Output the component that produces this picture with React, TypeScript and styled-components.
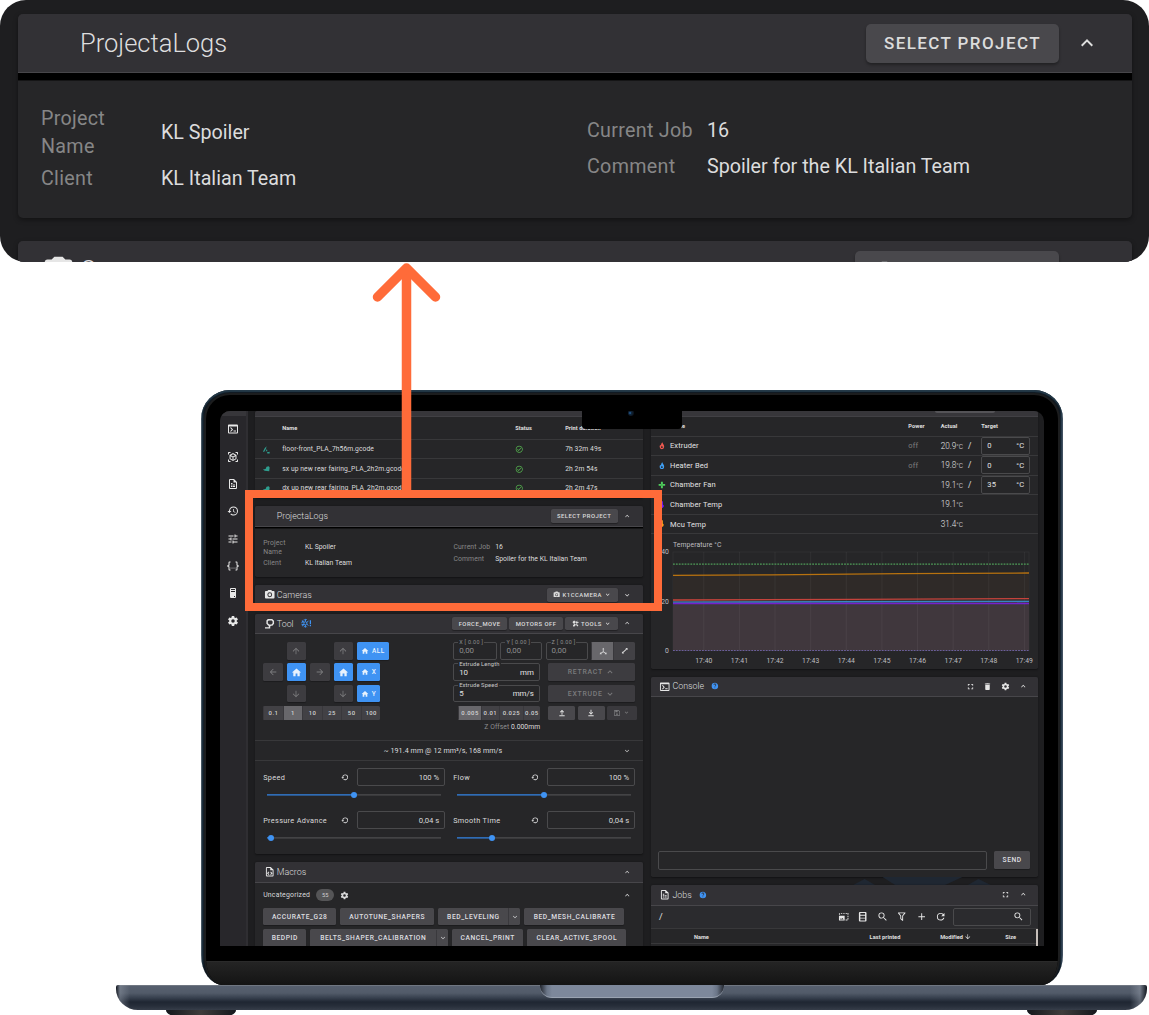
import React from 'react';
import styled, { createGlobalStyle, css } from 'styled-components';

const Global = createGlobalStyle`
  *, *::before, *::after { box-sizing: border-box; }
  body { margin: 0; background: #fff; font-family: Roboto, "Liberation Sans", sans-serif; }
`;

/* ---------- icons ---------- */

const paths = {
  console: 'M20,19V7H4V19H20M20,3A2,2 0 0,1 22,5V19A2,2 0 0,1 20,21H4A2,2 0 0,1 2,19V5C2,3.89 2.9,3 4,3H20M13,17V15H18V17H13M9.58,13L5.57,9H8.4L11.7,12.3C12.09,12.69 12.09,13.33 11.7,13.72L8.42,17H5.59L9.58,13Z',
  cubeScan: 'M17,22V20H20V17H22V20.5C22,20.89 21.84,21.24 21.54,21.54C21.24,21.84 20.89,22 20.5,22H17M7,22H3.5C3.11,22 2.76,21.84 2.46,21.54C2.16,21.24 2,20.89 2,20.5V17H4V20H7V22M17,2H20.5C20.89,2 21.24,2.16 21.54,2.46C21.84,2.76 22,3.11 22,3.5V7H20V4H17V2M7,2V4H4V7H2V3.5C2,3.11 2.16,2.76 2.46,2.46C2.76,2.16 3.11,2 3.5,2H7M13,17.25L17,14.95V10.36L13,12.66V17.25M12,10.92L16,8.63L12,6.28L8,8.63L12,10.92M7,14.95L11,17.25V12.66L7,10.36V14.95M18.23,7.59C18.73,7.91 19,8.34 19,8.91V15.23C19,15.8 18.73,16.23 18.23,16.55L12.75,19.73C12.25,20.05 11.75,20.05 11.25,19.73L5.77,16.55C5.27,16.23 5,15.8 5,15.23V8.91C5,8.34 5.27,7.91 5.77,7.59L11.25,4.41C11.5,4.28 11.75,4.22 12,4.22C12.25,4.22 12.5,4.28 12.75,4.41L18.23,7.59Z',
  fileTable: 'M14,2H6A2,2 0 0,0 4,4V20A2,2 0 0,0 6,22H18A2,2 0 0,0 20,20V8L14,2M18,20H6V4H13V9H18V20M8,10H11V12H8V10M8,13H11V15H8V13M12,13H16V15H12V13M8,16H11V18H8V16M12,16H16V18H12V16Z',
  history: 'M13.5,8H12V13L16.28,15.54L17,14.33L13.5,12.25V8M13,3A9,9 0 0,0 4,12H1L4.96,16.03L9,12H6A7,7 0 0,1 13,5A7,7 0 0,1 20,12A7,7 0 0,1 13,19C11.07,19 9.32,18.21 8.06,16.94L6.64,18.36C8.27,20 10.5,21 13,21A9,9 0 0,0 22,12A9,9 0 0,0 13,3',
  tune: 'M3,17V19H9V17H3M3,5V7H13V5H3M13,21V19H21V17H13V15H11V21H13M7,9V11H3V13H7V15H9V9H7M21,13V11H11V13H21M15,9H17V7H21V5H17V3H15V9Z',
  json: 'M5,3H7V5H5V10A2,2 0 0,1 3,12A2,2 0 0,1 5,14V19H7V21H5C3.93,20.73 3,20.1 3,19V15A2,2 0 0,0 1,13H0V11H1A2,2 0 0,0 3,9V5A2,2 0 0,1 5,3M19,3A2,2 0 0,1 21,5V9A2,2 0 0,0 23,11H24V13H23A2,2 0 0,0 21,15V19A2,2 0 0,1 19,21H17V19H19V14A2,2 0 0,1 21,12A2,2 0 0,1 19,10V5H17V3H19M12,15A1,1 0 0,1 13,16A1,1 0 0,1 12,17A1,1 0 0,1 11,16A1,1 0 0,1 12,15M8,15A1,1 0 0,1 9,16A1,1 0 0,1 8,17A1,1 0 0,1 7,16A1,1 0 0,1 8,15M16,15A1,1 0 0,1 17,16A1,1 0 0,1 16,17A1,1 0 0,1 15,16A1,1 0 0,1 16,15Z',
  tower: 'M8,2H16A2,2 0 0,1 18,4V20A2,2 0 0,1 16,22H8A2,2 0 0,1 6,20V4A2,2 0 0,1 8,2M8,4V6H16V4H8M16,8H8V10H16V8M16,18H14V20H16V18Z',
  cog: 'M12,15.5A3.5,3.5 0 0,1 8.5,12A3.5,3.5 0 0,1 12,8.5A3.5,3.5 0 0,1 15.5,12A3.5,3.5 0 0,1 12,15.5M19.43,12.97C19.47,12.65 19.5,12.33 19.5,12C19.5,11.67 19.47,11.34 19.43,11L21.54,9.37C21.73,9.22 21.78,8.95 21.66,8.73L19.66,5.27C19.54,5.05 19.27,4.96 19.05,5.05L16.56,6.05C16.04,5.66 15.5,5.32 14.87,5.07L14.5,2.42C14.46,2.18 14.25,2 14,2H10C9.75,2 9.54,2.18 9.5,2.42L9.13,5.07C8.5,5.32 7.96,5.66 7.44,6.05L4.95,5.05C4.73,4.96 4.46,5.05 4.34,5.27L2.34,8.73C2.21,8.95 2.27,9.22 2.46,9.37L4.57,11C4.53,11.34 4.5,11.67 4.5,12C4.5,12.33 4.53,12.65 4.57,12.97L2.46,14.63C2.27,14.78 2.21,15.05 2.34,15.27L4.34,18.73C4.46,18.95 4.73,19.03 4.95,18.95L7.44,17.94C7.96,18.34 8.5,18.68 9.13,18.93L9.5,21.58C9.54,21.82 9.75,22 10,22H14C14.25,22 14.46,21.82 14.5,21.58L14.87,18.93C15.5,18.67 16.04,18.34 16.56,17.94L19.05,18.95C19.27,19.03 19.54,18.95 19.66,18.73L21.66,15.27C21.78,15.05 21.73,14.78 21.54,14.63L19.43,12.97Z',
  camera: 'M4,4H7L9,2H15L17,4H20A2,2 0 0,1 22,6V18A2,2 0 0,1 20,20H4A2,2 0 0,1 2,18V6A2,2 0 0,1 4,4M12,7A5,5 0 0,0 7,12A5,5 0 0,0 12,17A5,5 0 0,0 17,12A5,5 0 0,0 12,7M12,9A3,3 0 0,1 15,12A3,3 0 0,1 12,15A3,3 0 0,1 9,12A3,3 0 0,1 12,9Z',
  up: 'M7.41,15.41L12,10.83L16.59,15.41L18,14L12,8L6,14L7.41,15.41Z',
  down: 'M7.41,8.58L12,13.17L16.59,8.58L18,10L12,16L6,10L7.41,8.58Z',
  arrowUp: 'M13,20H11V8L5.5,13.5L4.08,12.08L12,4.16L19.92,12.08L18.5,13.5L13,8V20Z',
  home: 'M10,20V14H14V20H19V12H22L12,3L2,12H5V20H10Z',
  magnify: 'M9.5,3A6.5,6.5 0 0,1 16,9.5C16,11.11 15.41,12.59 14.44,13.73L14.71,14H15.5L20.5,19L19,20.5L14,15.5V14.71L13.73,14.44C12.59,15.41 11.11,16 9.5,16A6.5,6.5 0 0,1 3,9.5A6.5,6.5 0 0,1 9.5,3M9.5,5C7,5 5,7 5,9.5C5,12 7,14 9.5,14C12,14 14,12 14,9.5C14,7 12,5 9.5,5Z',
  fullscreen: 'M5,5H10V7H7V10H5V5M14,5H19V10H17V7H14V5M17,14H19V19H14V17H17V14M10,17V19H5V14H7V17H10Z',
  trash: 'M19,4H15.5L14.5,3H9.5L8.5,4H5V6H19M6,19A2,2 0 0,0 8,21H16A2,2 0 0,0 18,19V7H6V19Z',
  refresh: 'M17.65,6.35C16.2,4.9 14.21,4 12,4A8,8 0 0,0 4,12A8,8 0 0,0 12,20C15.73,20 18.84,17.45 19.73,14H17.65C16.83,16.33 14.61,18 12,18A6,6 0 0,1 6,12A6,6 0 0,1 12,6C13.66,6 15.14,6.69 16.22,7.78L13,11H20V4L17.65,6.35Z',
  plus: 'M19,13H13V19H11V13H5V11H11V5H13V11H19V13Z',
  filter: 'M15,19.88C15.04,20.18 14.94,20.5 14.71,20.71C14.32,21.1 13.69,21.1 13.3,20.71L9.29,16.7C9.06,16.47 8.96,16.16 9,15.87V10.75L4.21,4.62C3.87,4.19 3.95,3.56 4.38,3.22C4.57,3.08 4.78,3 5,3H19C19.22,3 19.43,3.08 19.62,3.22C20.05,3.56 20.13,4.19 19.79,4.62L15,10.75V19.88M7.04,5L11,10.06V15.58L13,17.58V10.05L16.96,5H7.04Z',
  fire: 'M13.500 1C14 5 19 8.500 19 14.500A7 7.500 0 0 1 5 14.500C5 12 6 10 7.500 8.500C8 10 8.500 10.500 9.500 11C9 7 10.500 3.500 13.500 1ZM12 11.500C10.500 13.200 9.500 14.200 9.500 16A2.500 2.700 0 0 0 14.500 16C14.500 14.200 13.500 13.200 12 11.500Z',
  fan: 'M9 2H15V9H22V15H15V22H9V15H2V9H9Z M12 10.5A1.5 1.5 0 1 0 12 13.5A1.5 1.5 0 1 0 12 10.5Z',
  thermo: 'M9 3A3 3 0 0 1 15 3V11A5.5 5.5 0 1 1 9 11Z',
  check: 'M12 2C6.5 2 2 6.5 2 12S6.5 22 12 22 22 17.5 22 12 17.5 2 12 2M12 20C7.59 20 4 16.41 4 12S7.59 4 12 4 20 7.59 20 12 16.41 20 12 20M16.59 7.58L10 14.17L7.41 11.59L6 13L10 17L18 9L16.59 7.58Z',
  help: 'M15.07,11.25L14.17,12.17C13.45,12.89 13,13.5 13,15H11V14.5C11,13.39 11.45,12.39 12.17,11.67L13.41,10.41C13.78,10.05 14,9.55 14,9C14,7.89 13.1,7 12,7A2,2 0 0,0 10,9H8A4,4 0 0,1 12,5A4,4 0 0,1 16,9C16,9.88 15.64,10.67 15.07,11.25M13,19H11V17H13M12,2A10,10 0 0,0 2,12A10,10 0 0,0 12,22A10,10 0 0,0 22,12C22,6.47 17.5,2 12,2Z',
  fileCode: 'M14,2H6A2,2 0 0,0 4,4V20A2,2 0 0,0 6,22H18A2,2 0 0,0 20,20V8L14,2M18,20H6V4H13V9H18V20M9.5,11.5L11,13L9,15.2L11,17.4L9.5,19L6.3,15.2ZM14.5,11.5L17.7,15.2L14.5,19L13,17.4L15,15.2L13,13Z',
  image: 'M2 10H14V20H2ZM4 18H12L9.5 14.5L7.5 17L6 15.5ZM2 5H4V8H2ZM6 4H9V6H6ZM11 4H14V6H11ZM16 4H19V6H16ZM20 4H22V8H20ZM20 10H22V13H20ZM20 15H22V18H20ZM16 18H20V20H16Z',
  film: 'M6 2H18A2 2 0 0 1 20 4V20A2 2 0 0 1 18 22H6A2 2 0 0 1 4 20V4A2 2 0 0 1 6 2ZM7 4V8H17V4ZM7 10V14H17V10ZM7 16V20H17V16Z',
  nozzle: 'M8 2H17L21 6V12L17.500 16H14.500L13 18V22H2V19.500H10V16.500L8 15L5 12V5ZM10 5L8 7V11L11 13.500H15.500L18 11V7.200L16 5Z',
  hammer: 'M3 5L7 2L12 5L11 8L21 18L18 21L8 11L5.500 12L2 8ZM16 3L18 2L17 5L19 7L22 6C22.500 9 20 11 17.500 10.500L8 21C5 23 1 20 4 16L13.500 7.500C13 5.500 14 3.500 16 3Z',
  save: 'M5 3H17L21 7V19A2 2 0 0 1 19 21H5A2 2 0 0 1 3 19V5A2 2 0 0 1 5 3ZM5 5V19H19V8L16 5H14V10H7V5ZM12 13A2.500 2.500 0 1 0 12 18A2.500 2.500 0 1 0 12 13Z',
  axes: 'M9 6L12 2L15 6H13.200V12.500L19 16.500L20.500 14.500L22 20.500L16 20.500L17.500 18.500L12 15L6.500 18.500L8 20.500L2 20.500L3.500 14.500L5 16.500L10.800 12.500V6Z',
  diagonal: 'M14 3H21V10L18.700 7.700L7.700 18.700L10 21H3V14L5.300 16.300L16.300 5.300Z',
  lift: 'M4 18.500H20V21.500H4ZM10.600 17V7.500L7.500 10.700L5.600 8.800L12 2.400L18.400 8.800L16.500 10.700L13.400 7.500V17Z',
  lower: 'M4 18.500H20V21.500H4ZM10.600 2.500V12L7.500 8.800L5.600 10.700L12 17.100L18.400 10.700L16.500 8.800L13.400 12V2.500Z',
  restore: 'M12 4A8 8 0 0 1 20 12A8 8 0 0 1 6.300 17.700L7.900 16.100A5.800 5.800 0 1 0 6.200 12H9L5 16L1 12H4A8 8 0 0 1 12 4Z',
};
type IconName = keyof typeof paths;

const Svg = styled.svg<{ $turn?: number }>`
  display: block;
  flex: none;
  fill: currentColor;
  ${p => p.$turn && css`transform: rotate(${p.$turn}deg);`}
`;
const Icon = ({ name, size = 9.5, color, turn }: { name: IconName; size?: number; color?: string; turn?: number }) => (
  <Svg viewBox="0 0 24 24" width={size} height={size} color={color} $turn={turn} fillRule="evenodd">
    <path d={paths[name]} />
  </Svg>
);

/* ---------- page and device ---------- */

const Page = styled.main`
  position: relative;
  width: 1149px;
  height: 1015px;
  overflow: hidden;
  display: flex;
  flex-direction: column;
  background: #fff;
`;
const Magnified = styled.section`
  --u: 1px;
  --drop: 0.5px;
  flex: none;
  height: 262px;
  padding: 14px 17px 0 18px;
  display: flex;
  flex-direction: column;
  gap: 23px;
  border-radius: 26px;
  overflow: hidden;
  background: #1e1e20;
`;
const Laptop = styled.section`
  margin: 128px 2px 0 116px;
  display: flex;
  flex-direction: column;
  align-items: center;
`;
const Lid = styled.div`
  width: 862px;
  height: 595px;
  margin-left: 1px;
  padding: 3px 3px 0;
  border-radius: 29px 29px 22px 22px / 29px 29px 30px 30px;
  background: linear-gradient(90deg, #66737d 0, #1d2f3c 1.5px, #101820 3px, #101820 859px, #1d3041 860px, #536170 862px);
  box-shadow: inset 0 2px 1px #243a49;
`;
const Bezel = styled.div`
  height: 592px;
  border: 2px solid #1c1d1e;
  border-bottom: 0;
  padding: 16px 14px 0;
  border-radius: 26px 26px 18px 18px / 26px 26px 28px 28px;
  overflow: hidden;
  background: #000;
`;
const Chin = styled.div`
  height: 24px;
  margin: 15px -14px 0;
  border-top: 1px solid #2a2a2a;
  background: linear-gradient(#242424, #141414);
`;
const Base = styled.div`
  align-self: stretch;
  height: 25px;
  display: flex;
  justify-content: center;
  border-radius: 2px 2px 22px 22px / 2px 2px 21px 21px;
  background:
    linear-gradient(90deg, #10151d 0, #8b93a080 4px, #3b434f00 14px, #3b434f00 1014px, #8b93a090 1024px, #10151d 1031px),
    linear-gradient(#7d838c 0, #565f6e 1.5px, #525b69 8px, #363f4d 13px, #1f2632 17px, #272e3a 21px, #363d49 25px);
`;
const Lip = styled.div`
  width: 184px;
  height: 13px;
  border-radius: 0 0 12px 12px;
  border-bottom: 1px solid #9aa3b1;
  background: linear-gradient(90deg, #22262e 0, #6b7688 7px, #7d889b 12px, #7d889b 172px, #6b7688 177px, #22262e 184px);
`;
const Feet = styled.div`
  align-self: stretch;
  display: flex;
  justify-content: space-between;
  padding: 0 50px;
`;
const Foot = styled.div`
  width: 70px;
  height: 8px;
  border-radius: 0 0 20px 20px / 0 0 8px 8px;
  background: linear-gradient(90deg, #15181d, #3f3c3b 50%, #15181d);
`;

const Screen = styled.div`
  --u: 0.3484px;
  --drop: 1.2px;
  position: relative;
  width: 824px;
  height: 535px;
  display: flex;
  overflow: hidden;
  border-radius: 10px 10px 0 0;
  background: #1e1e20;
  color: #dcdcdd;
  font-size: 6.75px;
  letter-spacing: 0.01em;
`;
const CameraNotch = styled.div`
  position: absolute;
  left: 362px;
  top: -1px;
  width: 100px;
  height: 19px;
  border-radius: 0 0 4px 4px;
  background: #000;
  &::after {
    content: '';
    position: absolute;
    left: 46px;
    top: 0;
    width: 6px;
    height: 6px;
    border-radius: 50%;
    background: radial-gradient(circle at 35% 50%, #2a6cb0 0, #10263c 30%, #0b0f14 80%);
  }
`;

/* ---------- dashboard shell ---------- */

const Nav = styled.nav`
  flex: none;
  width: 28px;
  border-right: 2px solid #2f2e32;
  background: #28272b;
  display: flex;
  flex-direction: column;
  align-items: center;
  color: #e8e8e8;
  &::before { content: ''; align-self: stretch; flex: none; height: 4.800px; background: #37363a; }
`;
const NavItem = styled.div`
  height: 27.3px;
  display: flex;
  align-items: center;
`;
const Columns = styled.div`
  flex: none;
  display: flex;
  gap: 7.700px;
  padding-left: 7.200px;
`;
const Column = styled.div<{ $w: number }>`
  width: ${p => p.$w}px;
  display: flex;
  flex-direction: column;
`;
const Card = styled.section<{ $h?: number; $mt?: number }>`
  flex: none;
  height: ${p => (p.$h ? `${p.$h}px` : 'auto')};
  margin-top: ${p => p.$mt ?? 0}px;
  display: flex;
  flex-direction: column;
  overflow: hidden;
  border-radius: calc(var(--u) * 5);
  background: #262628;
  box-shadow: 0 calc(var(--u) * 2) calc(var(--u) * 5) #00000066;
`;
const CardHead = styled.header`
  flex: none;
  height: calc(var(--u) * 59);
  display: flex;
  align-items: center;
  padding-left: calc(var(--u) * 24);
  border-bottom: max(calc(var(--u) * 1), 0.7px) solid #47464a;
  background: #323135;
`;
const HeadIcon = styled.span`
  width: calc(var(--u) * 38);
  display: flex;
  color: #e6e6e6;
  svg { width: calc(var(--u) * 33); height: calc(var(--u) * 33); }
`;
const Title = styled.h2`
  margin: 0 calc(var(--u) * 20) 0 0;
  font-size: calc(var(--u) * 25.500);
  font-weight: 300;
  letter-spacing: 0;
  color: #dededf;
`;
const HeadSpace = styled.div`flex: 1;`;
const HeadButton = styled.span<{ $w: number }>`
  width: calc(var(--u) * ${p => p.$w});
  height: calc(var(--u) * 39);
  margin-left: calc(var(--u) * 7);
  display: flex;
  align-items: center;
  justify-content: center;
  gap: calc(var(--u) * 6);
  border-radius: calc(var(--u) * 5);
  background: #49484c;
  box-shadow: 0 calc(var(--u) * 2) calc(var(--u) * 3) #00000055;
  font-size: calc(var(--u) * 17);
  font-weight: 500;
  letter-spacing: 0.082em;
  color: #dcdcdc;
  white-space: nowrap;
  svg { width: calc(var(--u) * 21); height: calc(var(--u) * 21); }
`;
const HeadChevron = styled.span`
  width: calc(var(--u) * 55);
  margin-right: calc(var(--u) * 18);
  display: flex;
  justify-content: center;
  color: #dedede;
  svg { width: calc(var(--u) * 24); height: calc(var(--u) * 24); }
`;

/* ---------- project card, shared by the magnified view and the screen ---------- */

const BlackBar = styled.div`
  height: calc(var(--u) * 8);
  border-bottom: calc(var(--u) * 1) solid #151516;
  background: #000;
`;
const ProjectBody = styled.div`
  height: calc(var(--u) * 137);
  padding-top: var(--drop);
  display: flex;
  font-size: calc(var(--u) * 19.700);
  letter-spacing: 0;
  line-height: calc(var(--u) * 28);
`;
const FactColumn = styled.dl<{ $w: number; $top: number; $gap: number }>`
  width: calc(var(--u) * ${p => p.$w});
  margin: calc(var(--u) * ${p => p.$top}) 0 0 calc(var(--u) * 23);
  display: grid;
  grid-template-columns: calc(var(--u) * 120) 1fr;
  align-content: start;
  align-items: center;
  row-gap: calc(var(--u) * ${p => p.$gap});
`;
const Fact = styled.dt`
  color: #868687;
  letter-spacing: 0.015em;
  padding-right: calc(var(--u) * 12);
`;
const Value = styled.dd`
  margin: 0;
  color: #dcdcdd;
  white-space: nowrap;
`;

const ProjectCard = ({ mt = 0 }: { mt?: number }) => (
  <Card $mt={mt}>
    <CardHead>
      <HeadIcon />
      <Title>ProjectaLogs</Title>
      <HeadSpace />
      <HeadButton $w={193}>SELECT PROJECT</HeadButton>
      <HeadChevron><Icon name="up" /></HeadChevron>
    </CardHead>
    <BlackBar />
    <ProjectBody>
      <FactColumn $w={523} $top={23} $gap={4}>
        <Fact>Project<br />Name</Fact><Value>KL Spoiler</Value>
        <Fact>Client</Fact><Value>KL Italian Team</Value>
      </FactColumn>
      <FactColumn $w={500} $top={35.500} $gap={8}>
        <Fact>Current Job</Fact><Value>16</Value>
        <Fact>Comment</Fact><Value>Spoiler for the KL Italian Team</Value>
      </FactColumn>
    </ProjectBody>
  </Card>
);
const CameraCard = ({ mt = 0 }: { mt?: number }) => (
  <Card $mt={mt}>
    <CardHead>
      <HeadIcon><Icon name="camera" /></HeadIcon>
      <Title>Cameras</Title>
      <HeadSpace />
      <HeadButton $w={204}><Icon name="camera" />K1CCAMERA <Icon name="down" /></HeadButton>
      <HeadChevron><Icon name="down" /></HeadChevron>
    </CardHead>
  </Card>
);

/* ---------- print history ---------- */

const Stub = styled.div`
  flex: none;
  height: 6.400px;
  border-bottom: 1px solid #414044;
  background: #37363a;
`;
const StubTab = styled.div`
  width: 60px;
  height: 1.700px;
  margin-left: 284px;
  border-radius: 0 0 2px 2px;
  background: #545357;
`;
const HistoryRow = styled.div<{ $h: number; $head?: boolean }>`
  height: ${p => p.$h}px;
  display: grid;
  grid-template-columns: 20px 233px 50px 1fr;
  align-items: center;
  padding: 1px 0 0 7px;
  border-bottom: 1px solid #38383a;
  white-space: nowrap;
  ${p => p.$head && css`font-size: 5.600px; font-weight: 700; color: #e0e0e0; padding-top: 0;`}
`;
const Thumb = ({ kind }: { kind: number }) => (
  <Svg viewBox="0 0 10 10" width={9} height={9} color="#2f9d8e">
    {kind === 0
      ? <path d="M1 7.500L3 3.500L5 1.500L4.500 4L2.500 7.500ZM4 7L5.500 4.500L6 7ZM5.500 8L8.500 7.500L8.500 9.500L6 9.500Z" />
      : <path d="M1 6L4 5.500L5 3L7.500 2.500L8.500 4L8 8L3 7.500Z" />}
  </Svg>
);

/* ---------- tool card ---------- */

const ToolBody = styled.div`
  height: 106.300px;
  padding: 7.500px 8px 0;
  display: flex;
  justify-content: space-between;
`;
const ToolPane = styled.div<{ $w: number }>`
  width: ${p => p.$w}px;
  display: flex;
  flex-direction: column;
  gap: 3.700px;
`;
const Line = styled.div<{ $gap?: number }>`
  display: flex;
  gap: ${p => p.$gap ?? 4}px;
  & > * { flex: none; }
`;
const Key = styled.span<{ $w?: number; $blue?: boolean; $blank?: boolean }>`
  flex: none;
  width: ${p => p.$w ?? 19.500}px;
  height: 17.700px;
  display: flex;
  align-items: center;
  justify-content: center;
  gap: 2.500px;
  border-radius: 1.500px;
  font-size: 6.500px;
  font-weight: 500;
  letter-spacing: 0.07em;
  background: ${p => (p.$blue ? '#3f93f3' : '#3d3c40')};
  color: ${p => (p.$blue ? '#e8f2fd' : '#7b7b7d')};
  box-shadow: 0 1px 1px #00000044;
  visibility: ${p => (p.$blank ? 'hidden' : 'visible')};
`;
const Toggle = styled.div`
  display: flex;
  height: 13.800px;
  border-radius: 1.500px;
  overflow: hidden;
  background: #424145;
  font-size: 5.900px;
  font-weight: 500;
  letter-spacing: 0.08em;
`;
const Option = styled.span<{ $w: number; $on?: boolean }>`
  width: ${p => p.$w}px;
  display: flex;
  align-items: center;
  justify-content: center;
  border-left: 0.5px solid #39383c;
  background: ${p => (p.$on ? '#68676b' : 'transparent')};
  color: #d4d4d5;
`;
const TallToggle = styled(Toggle)`height: 17.700px;`;
const OffsetToggle = styled(Toggle)`margin: 0 5.800px 0 5px;`;
const Field = styled.div<{ $w: number; $dim?: boolean }>`
  position: relative;
  width: ${p => p.$w}px;
  height: 17.700px;
  padding: 0 5px;
  display: flex;
  align-items: center;
  justify-content: space-between;
  border: 1px solid #4a4a4c;
  border-radius: 2px;
  font-size: 7.900px;
  letter-spacing: 0;
  color: ${p => (p.$dim ? '#8e8e8f' : '#e2e2e3')};
`;
const FieldLabel = styled.label<{ $dim?: boolean }>`
  position: absolute;
  left: 4px;
  top: -3.700px;
  padding: 0 1px;
  background: #262628;
  font-size: ${p => (p.$dim ? 5.4 : 5.8)}px;
  line-height: 7px;
  letter-spacing: ${p => (p.$dim ? '0.06em' : '0.02em')};
  color: ${p => (p.$dim ? '#8e8e8f' : '#c8c8c9')};
  white-space: nowrap;
`;
const BigButton = styled(Key)`
  font-size: 6.900px;
  letter-spacing: 0.11em;
`;
const SmallButton = styled.span<{ $w: number; $off?: boolean }>`
  width: ${p => p.$w}px;
  height: 13.800px;
  display: flex;
  align-items: center;
  justify-content: center;
  gap: 2px;
  border-radius: 1.500px;
  background: ${p => (p.$off ? '#3a393d' : '#49484c')};
  color: ${p => (p.$off ? '#7b7b7d' : '#e2e2e2')};
`;
const Offset = styled.div`
  text-align: right;
  margin-right: 95px;
  margin-top: -0.300px;
  color: #8f8f90;
  b { font-weight: 400; color: #dededf; }
`;
const FlowRate = styled.div`
  height: 20.200px;
  display: flex;
  align-items: center;
  padding: 1px 11.800px 0 128.500px;
  border: solid #38383a;
  border-width: 1px 0;
  font-size: 7.150px;
  & > svg { margin-left: auto; color: #dedede; }
`;
const Sliders = styled.div`
  flex: 1;
  display: grid;
  grid-template-columns: 182px 182px;
  grid-auto-rows: 43px;
  column-gap: 8px;
  padding: 7.700px 8px 0;
`;
const Setting = styled.div`display: flex; flex-direction: column;`;
const SettingTop = styled.div`
  height: 18px;
  display: flex;
  align-items: center;
  color: #dadadb;
  font-size: 7.300px;
  letter-spacing: 0.045em;
  & > svg { margin-left: auto; margin-right: 7px; }
`;
const Entry = styled.span`
  width: 88.500px;
  height: 18px;
  display: flex;
  align-items: center;
  justify-content: flex-end;
  padding-right: 5px;
  border: 1px solid #4a4a4c;
  border-radius: 2px;
  font-size: 7.700px;
  letter-spacing: 0;
`;
const Track = styled.div<{ $at: number }>`
  height: 6px;
  margin: 5.800px 4px 0;
  display: flex;
  align-items: center;
  background: linear-gradient(90deg, #2f6cb5 ${p => p.$at}%, #434345 ${p => p.$at}%) center / 100% 1.700px no-repeat;
  &::before { content: ''; width: calc(${p => p.$at}% - 3px); }
  &::after { content: ''; width: 6px; height: 6px; border-radius: 50%; background: #3f93f3; }
`;

const settings = [
  { label: 'Speed', value: '100 %', at: 50 },
  { label: 'Flow', value: '100 %', at: 50 },
  { label: 'Pressure Advance', value: '0,04 s', at: 2 },
  { label: 'Smooth Time', value: '0,04 s', at: 20 },
];

const HomingMark = () => (
  <Svg viewBox="0 0 24 24" width={10.500} height={10.500} color="#3f93f3">
    <g fill="none" stroke="currentColor" strokeWidth="2.2">
      <circle cx="10" cy="12" r="3.500" />
      <path d="M10 2V8M10 16V22M2 7L7 10M13 14L17 17M2 17L7 14M13 10L17 7M7 3L10 6L13 3M7 21L10 18L13 21M1 10L5 9L4 5M1 14L5 15L4 19" />
    </g>
    <path d="M20 5H23V14H20ZM20 16H23V19H20Z" />
  </Svg>
);

const ToolCard = () => (
  <Card $h={240.300} $mt={8}>
    <CardHead>
      <HeadIcon><Icon name="nozzle" /></HeadIcon>
      <Title>Tool</Title>
      <HomingMark />
      <HeadSpace />
      <HeadButton $w={157}>FORCE_MOVE</HeadButton>
      <HeadButton $w={153}>MOTORS OFF</HeadButton>
      <HeadButton $w={151}><Icon name="hammer" />TOOLS <Icon name="down" /></HeadButton>
      <HeadChevron><Icon name="up" /></HeadChevron>
    </CardHead>
    <ToolBody>
      <ToolPane $w={126}>
        <Line>
          <Key $blank /><Key><Icon name="arrowUp" size={10} /></Key><Key $blank /><Key><Icon name="arrowUp" size={10} /></Key>
          <Key $blue $w={31.800}><Icon name="home" size={8} />ALL</Key>
        </Line>
        <Line>
          <Key><Icon name="arrowUp" size={10} turn={-90} /></Key><Key $blue><Icon name="home" size={11} /></Key>
          <Key><Icon name="arrowUp" size={10} turn={90} /></Key><Key $blue><Icon name="home" size={11} /></Key>
          <Key $blue $w={23}><Icon name="home" size={8} />X</Key>
        </Line>
        <Line>
          <Key $blank /><Key><Icon name="arrowUp" size={10} turn={180} /></Key><Key $blank /><Key><Icon name="arrowUp" size={10} turn={180} /></Key>
          <Key $blue $w={23}><Icon name="home" size={8} />Y</Key>
        </Line>
        <Line>
          <Toggle>
            {['0.1', '1', '10', '25', '50', '100'].map(s => <Option key={s} $w={19.550} $on={s === '1'}>{s}</Option>)}
          </Toggle>
        </Line>
      </ToolPane>
      <ToolPane $w={182}>
        <Line $gap={3.500}>
          <Field $w={43.700} $dim><FieldLabel $dim>X [ 0.00 ]</FieldLabel>0,00</Field>
          <Field $w={41.700} $dim><FieldLabel $dim>Y [ 0.00 ]</FieldLabel>0,00</Field>
          <Field $w={42.300} $dim><FieldLabel $dim>Z [ 0.00 ]</FieldLabel>0,00</Field>
          <TallToggle>
            <Option $w={21.800} $on><Icon name="axes" size={8.500} /></Option>
            <Option $w={21.800}><Icon name="diagonal" size={7.500} /></Option>
          </TallToggle>
        </Line>
        <Line $gap={8}>
          <Field $w={86.700}><FieldLabel>Extrude Length</FieldLabel><span>10</span><span>mm</span></Field>
          <BigButton $w={87.300}>RETRACT <Icon name="up" size={10} /></BigButton>
        </Line>
        <Line $gap={8}>
          <Field $w={86.700}><FieldLabel>Extrude Speed</FieldLabel><span>5</span><span>mm/s</span></Field>
          <BigButton $w={87.300}>EXTRUDE <Icon name="down" size={10} /></BigButton>
        </Line>
        <Line $gap={2.200}>
          <OffsetToggle>
            <Option $w={22.700} $on>0.005</Option><Option $w={18}>0.01</Option>
            <Option $w={24}>0.025</Option><Option $w={17}>0.05</Option>
          </OffsetToggle>
          <SmallButton $w={27.500}><Icon name="lift" size={8} /></SmallButton>
          <SmallButton $w={27.500}><Icon name="lower" size={8} /></SmallButton>
          <SmallButton $w={29.500} $off><Icon name="save" size={8} /><Icon name="down" size={7} /></SmallButton>
        </Line>
        <Offset>Z Offset <b>0.000mm</b></Offset>
      </ToolPane>
    </ToolBody>
    <FlowRate>~ 191.4 mm @ 12 mm³/s, 168 mm/s<Icon name="down" size={8} /></FlowRate>
    <Sliders>
      {settings.map(s => (
        <Setting key={s.label}>
          <SettingTop>{s.label}<Icon name="restore" size={8.500} /><Entry>{s.value}</Entry></SettingTop>
          <Track $at={s.at} />
        </Setting>
      ))}
    </Sliders>
  </Card>
);

/* ---------- macros ---------- */

const MacroGroup = styled.div`
  height: 25px;
  display: flex;
  align-items: center;
  padding: 0 12px 0 8px;
  font-size: 6.900px;
  letter-spacing: 0.03em;
  color: #dadadb;
  & > svg:last-child { margin-left: auto; }
`;
const Badge = styled.span`
  width: 18px;
  height: 11.500px;
  margin: 0 6px;
  display: flex;
  align-items: center;
  justify-content: center;
  border-radius: 6px;
  background: #555557;
  font-size: 5.700px;
  letter-spacing: 0;
  color: #cfcfd0;
`;
const MacroRow = styled.div`
  flex: none;
  display: flex;
  gap: 4px;
  padding: 0 8px 3.800px;
`;
const Macro = styled.span<{ $w: number }>`
  width: ${p => p.$w}px;
  height: 17.600px;
  padding-top: 0.600px;
  display: flex;
  align-items: center;
  justify-content: center;
  border-radius: 1.500px;
  background: #49484c;
  box-shadow: 0 1px 1px #00000044;
  color: #dfdfe0;
  font-size: 6.700px;
  font-weight: 500;
  letter-spacing: 0.085em;
  white-space: nowrap;
  & > em { flex: 1; font-style: normal; text-align: center; }
`;
const MacroMenu = styled.span`
  align-self: stretch;
  width: 12px;
  display: flex;
  align-items: center;
  justify-content: center;
  border-left: 1px solid #3a393d;
`;
const Macros = ({ items }: { items: [string, number, boolean?][] }) => (
  <MacroRow>
    {items.map(([name, w, menu]) => (
      <Macro key={name} $w={w}><em>{name}</em>{menu && <MacroMenu><Icon name="down" size={8} /></MacroMenu>}</Macro>
    ))}
  </MacroRow>
);

/* ---------- thermals ---------- */

const ThermalRow = styled.div<{ $h: number; $head?: boolean }>`
  flex: none;
  height: ${p => p.$h}px;
  display: grid;
  grid-template-columns: 11.600px 238.400px 32.300px 40.700px 49px;
  align-items: center;
  padding-left: 7.500px;
  border-bottom: 1px solid #38383a;
  font-size: 7.500px;
  letter-spacing: 0.015em;
  color: #e2e2e3;
  white-space: nowrap;
  ${p => p.$head && css`font-size: 5.600px; font-weight: 700; color: #e0e0e0;`}
`;
const Off = styled.span`color: #7d7d7e;`;
const Reading = styled.span`
  font-size: 8.200px;
  font-weight: 300;
  letter-spacing: 0;
  small { font-size: 6.600px; }
  i { font-style: normal; font-weight: 400; margin-left: 5px; }
`;
const Target = styled.span`
  height: 18px;
  display: flex;
  align-items: center;
  justify-content: space-between;
  padding: 0 5px;
  border: 1px solid #4a4a4c;
  border-radius: 2px;
  font-size: 7.600px;
`;
const heaters: { icon: IconName; color: string; name: string; off?: boolean; temp: string; target?: string }[] = [
  { icon: 'fire', color: '#f05a50', name: 'Extruder', off: true, temp: '20.9', target: '0' },
  { icon: 'fire', color: '#3fa0f5', name: 'Heater Bed', off: true, temp: '19.8', target: '0' },
  { icon: 'fan', color: '#4fcf5c', name: 'Chamber Fan', temp: '19.1', target: '35' },
  { icon: 'thermo', color: '#7a1bff', name: 'Chamber Temp', temp: '19.1' },
  { icon: 'thermo', color: '#ff9a1c', name: 'Mcu Temp', temp: '31.4' },
];

const Chart = () => {
  const ticks = Array.from({ length: 10 }, (_, i) => 52.800 + i * 35.620);
  return (
    <Svg viewBox="0 0 388 134" width={388} height={134} fontSize="6.8" color="#bfbfc0">
      <text x="22" y="13" letterSpacing="0.1">Temperature °C</text>
      <rect x="22" y="18" width="356" height="98.500" fill="none" stroke="#323234" strokeWidth="0.8" />
      <rect x="22" y="40.500" width="356" height="76" fill="#2f2a28" />
      <rect x="22" y="66.500" width="356" height="50" fill="#40373d" />
      {ticks.map(x => <path key={x} d={`M${x} 18V116.500`} stroke="#ffffff" strokeOpacity="0.05" />)}
      <path d="M22 30.200H378" stroke="#4f9c58" strokeWidth="1.2" strokeDasharray="1.8 1.1" />
      <path d="M22 41.400L120 40.800L250 39.600L378 39" stroke="#b8720f" strokeWidth="1.3" fill="none" />
      <path d="M22 66L200 65.300L378 64.600" stroke="#c5433c" strokeWidth="1.3" fill="none" />
      <path d="M22 68.100L200 67.800L378 67.400" stroke="#3389c0" strokeWidth="1.4" fill="none" />
      <path d="M22 69.600H378" stroke="#7421cf" strokeWidth="1.5" />
      <path d="M22 116.500H378" stroke="#6a5f9c" strokeWidth="1" strokeDasharray="1.8 1.1" />
      <g textAnchor="end">
        <text x="18" y="20">40</text><text x="18" y="69.500">20</text><text x="18" y="118.800">0</text>
      </g>
      <g textAnchor="middle">
        {ticks.map((x, i) => <text key={x} x={x} y="129">{`17:${40 + i}`}</text>)}
      </g>
    </Svg>
  );
};

/* ---------- console and jobs ---------- */

const HeadTools = styled.div`
  display: flex;
  margin-right: 6.500px;
  color: #e6e6e6;
  & > span { width: 17.600px; display: flex; justify-content: center; }
`;
const ConsoleEntry = styled.div`
  margin-top: auto;
  padding: 0 8px 7.300px 7.300px;
  display: flex;
  gap: 7.500px;
`;
const ConsoleInput = styled.div`
  flex: 1;
  height: 18.500px;
  border: 1px solid #4a4a4c;
  border-radius: 2px;
`;
const JobsBar = styled.div`
  height: 23px;
  display: flex;
  align-items: center;
  padding: 0 7.300px 0 8px;
  background: #2b2b2e;
  border-bottom: 1px solid #38383a;
  color: #e6e6e6;
  font-size: 9px;
`;
const JobsTools = styled.div`
  margin-left: auto;
  margin-right: 2.300px;
  display: flex;
  & > span { width: 19.500px; display: flex; justify-content: center; }
`;
const Search = styled.div`
  width: 78px;
  height: 18px;
  display: flex;
  align-items: center;
  justify-content: flex-end;
  padding-right: 6px;
  border: 1px solid #4a4a4c;
  border-radius: 2px;
`;
const JobsHead = styled.div`
  height: 15.800px;
  display: grid;
  grid-template-columns: 175.700px 70.600px 65px 1fr 2px;
  align-items: center;
  padding-left: 43px;
  border-bottom: 1px solid #38383a;
  font-size: 5.600px;
  font-weight: 700;
  color: #e0e0e0;
  & > span { display: flex; align-items: center; gap: 1px; }
`;
const ScrollThumb = styled.div`
  height: 17px;
  align-self: start;
  background: #c6bfba;
`;

/* ---------- callout ---------- */

const Frame = styled.div`
  position: absolute;
  left: 245px;
  top: 490px;
  width: 417px;
  height: 121px;
  border: 8px solid #ff6b39;
`;
const Arrow = styled.svg`
  position: absolute;
  left: 366px;
  top: 260px;
  fill: none;
  stroke: #ff6b39;
  stroke-width: 9.5px;
  stroke-linecap: round;
  stroke-linejoin: round;
`;

const navIcons: IconName[] = ['console', 'cubeScan', 'fileTable', 'history', 'tune', 'json', 'tower', 'cog'];

export default function App() {
  return (
    <Page>
      <Global />
      <Magnified>
        <ProjectCard />
        <CameraCard />
      </Magnified>
      <Laptop>
        <Lid>
          <Bezel>
            <Screen>
              <Nav>{navIcons.map(n => <NavItem key={n}><Icon name={n} size={12} /></NavItem>)}</Nav>
              <Columns>
                <Column $w={388}>
                  <Card $h={87}>
                    <Stub />
                    <HistoryRow $h={22.500} $head><span /><span>Name</span><span>Status</span><span>Print duration</span></HistoryRow>
                    {[['floor-front_PLA_7h56m.gcode', '7h 32m 49s'], ['sx up new rear fairing_PLA_2h2m.gcode', '2h 2m 54s'], ['dx up new rear fairing_PLA_2h2m.gcode', '2h 2m 47s']].map(([n, d], i) => (
                      <HistoryRow key={n} $h={19.600}>
                        <Thumb kind={i} /><span>{n}</span><Icon name="check" size={8.500} color="#54b04f" /><span>{d}</span>
                      </HistoryRow>
                    ))}
                  </Card>
                  <ProjectCard mt={8} />
                  <CameraCard mt={8.300} />
                  <ToolCard />
                  <Card $h={100} $mt={8}>
                    <CardHead>
                      <HeadIcon><Icon name="fileCode" /></HeadIcon>
                      <Title>Macros</Title>
                      <HeadSpace />
                      <HeadChevron><Icon name="up" /></HeadChevron>
                    </CardHead>
                    <MacroGroup>Uncategorized<Badge>55</Badge><Icon name="cog" size={9} /><Icon name="up" size={8.500} /></MacroGroup>
                    <Macros items={[['ACCURATE_G28', 73], ['AUTOTUNE_SHAPERS', 94], ['BED_LEVELING', 82.300, true], ['BED_MESH_CALIBRATE', 100]]} />
                    <Macros items={[['BEDPID', 43.300], ['BELTS_SHAPER_CALIBRATION', 137.600, true], ['CANCEL_PRINT', 71.300], ['CLEAR_ACTIVE_SPOOL', 99]]} />
                  </Card>
                </Column>
                <Column $w={387.300}>
                  <Card $h={257.500}>
                    <Stub><StubTab /></Stub>
                    <ThermalRow $h={19.200} $head><span /><span>Name</span><span>Power</span><span>Actual</span><span>Target</span></ThermalRow>
                    {heaters.map(h => (
                      <ThermalRow key={h.name} $h={19.550}>
                        <Icon name={h.icon} size={7.800} color={h.color} />
                        <span>{h.name}</span>
                        <Off>{h.off && 'off'}</Off>
                        <Reading>{h.temp}<small>°C</small>{h.target && <i>/</i>}</Reading>
                        {h.target && <Target><span>{h.target}</span><span>°C</span></Target>}
                      </ThermalRow>
                    ))}
                    <Chart />
                  </Card>
                  <Card $h={200.300} $mt={8}>
                    <CardHead>
                      <HeadIcon><Icon name="console" /></HeadIcon>
                      <Title>Console</Title>
                      <Icon name="help" size={7.800} color="#3f93f3" />
                      <HeadSpace />
                      <HeadTools>
                        <span><Icon name="fullscreen" size={9} /></span><span><Icon name="trash" size={9} /></span>
                        <span><Icon name="cog" size={9} /></span><span><Icon name="up" size={8.500} /></span>
                      </HeadTools>
                    </CardHead>
                    <ConsoleEntry><ConsoleInput /><Macro $w={36}><em>SEND</em></Macro></ConsoleEntry>
                  </Card>
                  <Svg viewBox="0 0 388 8.3" width={387.300} height={8.300} color="#1f2732">
                    <path d="M202 8.300L214 2L225 8.300ZM232 0H312L294 8.300H245ZM317 8.300L328 2L341 8.300Z" />
                  </Svg>
                  <Card $h={70}>
                    <CardHead>
                      <HeadIcon><Icon name="fileTable" /></HeadIcon>
                      <Title>Jobs</Title>
                      <Icon name="help" size={7.800} color="#3f93f3" />
                      <HeadSpace />
                      <HeadTools>
                        <span><Icon name="fullscreen" size={9} /></span><span><Icon name="up" size={8.500} /></span>
                      </HeadTools>
                    </CardHead>
                    <JobsBar>
                      /
                      <JobsTools>
                        {(['image', 'film', 'magnify', 'filter', 'plus', 'refresh'] as IconName[]).map(n => (
                          <span key={n}><Icon name={n} size={11.400} /></span>
                        ))}
                      </JobsTools>
                      <Search><Icon name="magnify" size={11} /></Search>
                    </JobsBar>
                    <JobsHead>
                      <span>Name</span><span>Last printed</span>
                      <span>Modified<Icon name="arrowUp" size={7.500} turn={180} /></span><span>Size</span>
                      <ScrollThumb />
                    </JobsHead>
                  </Card>
                </Column>
              </Columns>
              <CameraNotch />
            </Screen>
            <Chin />
          </Bezel>
        </Lid>
        <Base><Lip /></Base>
        <Feet><Foot /><Foot /></Feet>
      </Laptop>
      <Frame />
      <Arrow width="80" height="236" viewBox="0 0 80 236">
        <path d="M40.500 9V234" strokeLinecap="butt" />
        <path d="M11.500 37L40.500 8L69.500 37" />
      </Arrow>
    </Page>
  );
}
